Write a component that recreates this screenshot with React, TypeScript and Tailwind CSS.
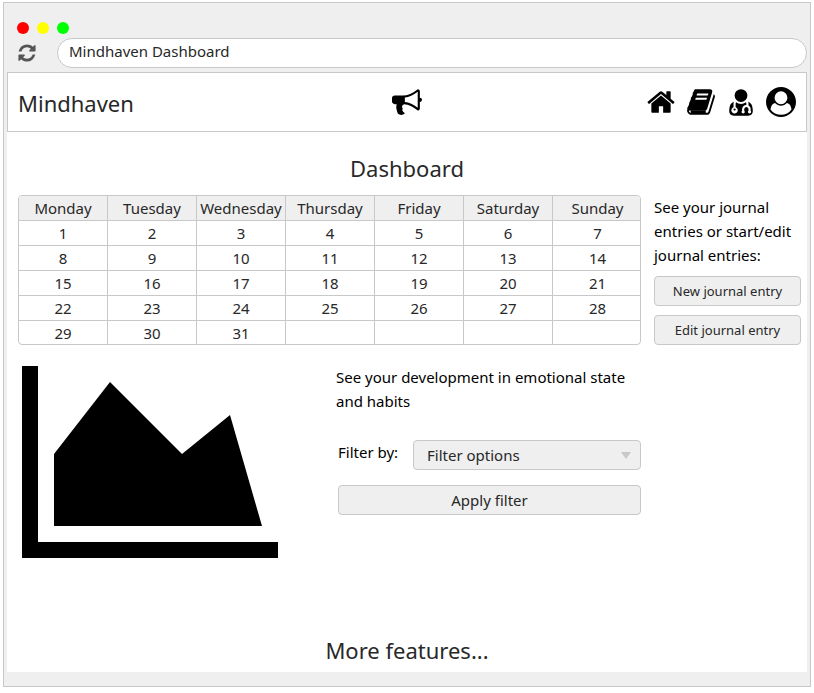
import { useState } from "react";
import type { ReactNode } from "react";

const DAYS = ["Monday", "Tuesday", "Wednesday", "Thursday", "Friday", "Saturday", "Sunday"];

const WEEKS = [0, 1, 2, 3, 4].map((week) =>
  DAYS.map((_, day) => week * 7 + day + 1).map((date) => (date <= 31 ? date : null)),
);

const ICONS = {
  refresh:
    "M1639 1056q0 5-1 7-64 268-268 434.5t-478 166.5q-146 0-282.5-55t-243.5-157l-129 129q-19 19-45 19t-45-19-19-45v-448q0-26 19-45t45-19h448q26 0 45 19t19 45-19 45l-137 137q71 66 161 102t187 36q134 0 250-65t186-179q11-17 53-117 8-23 30-23h192q13 0 22.5 9.5t9.5 22.5zm25-800v448q0 26-19 45t-45 19h-448q-26 0-45-19t-19-45 19-45l138-138q-148-137-349-137-134 0-250 65t-186 179q-11 17-53 117-8 23-30 23h-199q-13 0-22.5-9.5t-9.5-22.5v-7q65-268 270-434.5t480-166.5q146 0 284 55.5t245 156.5l130-129q19-19 45-19t45 19 19 45z",
  bullhorn:
    "M1664 640q53 0 90.5 37.5t37.5 90.5-37.5 90.5-90.5 37.5v384q0 52-38 90t-90 38q-417-347-812-380-58 19-91 66t-31 100.5 40 92.5q-20 33-23 65.5t6 58 33.5 55 48 50 61.5 50.5q-29 58-111.5 83t-168.5 11.5-132-55.5q-7-23-29.5-87.5t-32-94.5-23-89-15-101 3.5-98.5 22-110.5h-122q-66 0-113-47t-47-113v-192q0-66 47-113t113-47h480q435 0 896-384 52 0 90 38t38 90v384zm-128 604v-954q-394 302-768 343v270q377 42 768 341z",
  home: "M1472 992v480q0 26-19 45t-45 19h-384v-384h-256v384h-384q-26 0-45-19t-19-45v-480q0-1 .5-3t.5-3l575-474 575 474q1 2 1 6zm223-69l-62 74q-8 9-21 11h-3q-13 0-21-7l-692-577-692 577q-12 8-24 7-13-2-21-11l-62-74q-8-10-7-23.5t11-21.5l719-599q32-26 76-26t76 26l244 204v-195q0-14 9-23t23-9h192q14 0 23 9t9 23v408l219 182q10 8 11 21.5t-7 23.5z",
  book: "M1703 478q40 57 18 129l-275 906q-19 64-76.5 107.5t-122.5 43.5h-923q-77 0-148.5-53.5t-99.5-131.5q-24-67-2-127 0-4 3-27t4-37q1-8-3-21.5t-3-19.5q2-11 8-21t16.5-23.5 16.5-23.5q23-38 45-91.5t30-91.5q3-10 .5-30t-.5-28q3-11 17-28t17-23q21-36 42-92t25-90q1-9-2.5-32t.5-28q4-13 22-30.5t22-22.5q19-26 42.5-84.5t27.5-96.5q1-8-3-25.5t-2-26.5q2-8 9-18t18-23 17-21q8-12 16.5-30.5t15-35 16-36 19.5-32 26.5-23.5 36-11.5 47.5 5.5l-1 3q38-9 51-9h761q74 0 114 56t18 130l-274 906q-36 119-71.5 153.5t-128.5 34.5h-869q-27 0-38 15-11 16-1 43 24 70 144 70h923q29 0 56-15.5t35-41.5l300-987q7-22 5-57 38 15 59 43zm-1064 2q-4 13 2 22.5t20 9.5h608q13 0 25.5-9.5t16.5-22.5l21-64q4-13-2-22.5t-20-9.5h-608q-13 0-25.5 9.5t-16.5 22.5zm-83 256q-4 13 2 22.5t20 9.5h608q13 0 25.5-9.5t16.5-22.5l21-64q4-13-2-22.5t-20-9.5h-608q-13 0-25.5 9.5t-16.5 22.5z",
  doctor:
    "M576 1344q0 26-19 45t-45 19-45-19-19-45 19-45 45-19 45 19 19 45zm1024 109q0 121-73 190t-194 69h-874q-121 0-194-69t-73-190q0-68 5.5-131t24-138 47.5-132.5 81-103 120-60.5q-22 52-22 120v203q-58 20-93 70t-35 111q0 80 56 136t136 56 136-56 56-136q0-61-35.5-111t-92.5-70v-203q0-62 25-93 132 104 295 104t295-104q25 31 25 93v64q-106 0-181 75t-75 181v89q-32 29-32 71 0 40 28 68t68 28 68-28 28-68q0-42-32-71v-89q0-52 38-90t90-38 90 38 38 90v89q-32 29-32 71 0 40 28 68t68 28 68-28 28-68q0-42-32-71v-89q0-68-34.5-127.5t-93.5-93.5q0-10 .5-42.5t0-48-2.5-41.5-7-47-13-40q68 15 120 60.5t81 103 47.5 132.5 24 138 5.5 131zm-320-941q0 159-112.5 271.5t-271.5 112.5-271.5-112.5-112.5-271.5 112.5-271.5 271.5-112.5 271.5 112.5 112.5 271.5z",
  account:
    "M1523 1339q-22-155-87.5-257.5t-184.5-118.5q-67 74-159.5 115.5t-195.5 41.5-195.5-41.5-159.5-115.5q-119 16-184.5 118.5t-87.5 257.5q106 150 271 237.5t356 87.5 356-87.5 271-237.5zm-243-699q0-159-112.5-271.5t-271.5-112.5-271.5 112.5-112.5 271.5 112.5 271.5 271.5 112.5 271.5-112.5 112.5-271.5zm512 256q0 182-71 347.5t-190.5 286-285.5 191.5-349 71-349-71-285.5-191.5-190.5-286-71-347.5 71-348 191-286 286-191 348-71 348 71 286 191 191 286 71 348z",
};

function Icon({
  name,
  className,
  children,
}: {
  name: keyof typeof ICONS;
  className: string;
  children?: ReactNode;
}) {
  return (
    <svg viewBox="0 0 1792 1792" fill="currentColor" aria-hidden="true" className={className}>
      <path d={ICONS[name]} />
      {children}
    </svg>
  );
}

function NavButton({ label, children }: { label: string; children: ReactNode }) {
  return (
    <button type="button" aria-label={label} className="flex size-[30px] items-center justify-center text-black">
      {children}
    </button>
  );
}

function Button({ size, children }: { size: string; children: ReactNode }) {
  return (
    <button
      type="button"
      className={`flex h-[30px] w-full items-center justify-center rounded border border-[#c8c8c8] bg-[#efefef] ${size}`}
    >
      {children}
    </button>
  );
}

function BrowserBar() {
  const [address, setAddress] = useState("Mindhaven Dashboard");
  return (
    <div className="pt-[19px] pb-1">
      <div className="flex gap-2 pl-[10px]">
        <span className="size-3 rounded-full bg-[#ff0000]" />
        <span className="size-3 rounded-full bg-[#ffff00]" />
        <span className="size-3 rounded-full bg-[#00ff00]" />
      </div>
      <div className="mt-1 flex items-center gap-5 pl-[10px]">
        <button type="button" aria-label="Reload" className="text-[#555]">
          <Icon name="refresh" className="size-5" />
        </button>
        <input
          type="text"
          aria-label="Address"
          value={address}
          onChange={(event) => setAddress(event.target.value)}
          className="h-[30px] min-w-0 flex-1 rounded-full border border-[#c8c8c8] bg-white px-[11px] pb-1 text-[15px] outline-none"
        />
      </div>
    </div>
  );
}

function Header() {
  return (
    <header className="grid h-[60px] grid-cols-[1fr_auto_1fr] items-center border border-[#c8c8c8] px-[10px]">
      <span className="pt-0.5 text-[22px] leading-8">Mindhaven</span>
      <button type="button" aria-label="Announcements" className="text-black">
        <Icon name="bullhorn" className="size-[30px]" />
      </button>
      <nav className="flex justify-end gap-[10px]">
        <NavButton label="Home">
          <Icon name="home" className="size-[30px]" />
        </NavButton>
        <NavButton label="Journal">
          <Icon name="book" className="size-[30px]">
            <path d="M270 1390h910v160H300z" />
          </Icon>
        </NavButton>
        <NavButton label="Doctor">
          <Icon name="doctor" className="size-[30px]" />
        </NavButton>
        <NavButton label="Account">
          <Icon name="account" className="size-[30px]" />
        </NavButton>
      </nav>
    </header>
  );
}

function Calendar() {
  return (
    <div className="min-w-0 flex-1 overflow-hidden rounded border border-[#c8c8c8]">
      <table className="w-[calc(100%+2px)] table-fixed border-separate border-spacing-0 text-center text-[15px] leading-[22px]">
        <thead>
          <tr className="h-[25px] bg-[#efefef]">
            {DAYS.map((day) => (
              <th
                key={day}
                scope="col"
                className="border-r border-b border-[#c8c8c8] p-0 font-normal last:border-r-0"
              >
                {day}
              </th>
            ))}
          </tr>
        </thead>
        <tbody>
          {WEEKS.map((week, index) => (
            <tr key={index} className="h-[25px] last:h-[23px] [&:last-child>td]:border-b-0">
              {week.map((date, day) => (
                <td key={day} className="border-r border-b border-[#c8c8c8] p-0 last:border-r-0">
                  {date}
                </td>
              ))}
            </tr>
          ))}
        </tbody>
      </table>
    </div>
  );
}

function AreaChart() {
  return (
    <svg viewBox="0 0 256 192" role="img" aria-label="Emotional state over time" className="w-64 shrink-0 text-black">
      <path fill="currentColor" d="M0 0h16v176h240v16H0z" />
      <path fill="currentColor" d="M32 88l56-72 72 72 48-39 32 111H32z" />
    </svg>
  );
}

export default function App() {
  return (
    <div className="bg-white px-[3px] pt-0.5 pb-1.5 font-['Segoe_UI','Noto_Sans',sans-serif] text-[#282828]">
      <div className="border border-[#c8c8c8] bg-[#efefef] px-[3px] pb-3.5">
        <BrowserBar />
        <div className="bg-white">
          <Header />
          <main>
            <h1 className="mt-5 text-center text-[22px] leading-8">Dashboard</h1>
            <section className="mt-[11px] flex gap-[13px] pr-1.5 pl-[11px]">
              <Calendar />
              <div className="flex w-[147px] flex-col">
                <p className="text-[15px] leading-6 text-black">
                  See your journal entries or start/edit journal entries:
                </p>
                <div className="mt-[9px] flex flex-col gap-[9px]">
                  <Button size="pt-0.5 text-[13px]">New journal entry</Button>
                  <Button size="pt-0.5 text-[13px]">Edit journal entry</Button>
                </div>
              </div>
            </section>
            <section className="mt-5 flex justify-between pr-[166px] pl-[15px]">
              <div className="pt-px">
                <AreaChart />
              </div>
              <div className="w-[305px] text-[15px]">
                <p className="leading-6 text-black">See your development in emotional state and habits</p>
                <div className="mt-[27px] flex pl-0.5">
                  <label htmlFor="filter" className="w-[75px] leading-6 text-black">
                    Filter by:
                  </label>
                  <div className="grid flex-1 items-center">
                    <select
                      id="filter"
                      className="col-start-1 row-start-1 h-[30px] appearance-none rounded border border-[#c8c8c8] bg-[#efefef] px-[13px]"
                    >
                      <option>Filter options</option>
                    </select>
                    <svg
                      viewBox="0 0 10 7"
                      aria-hidden="true"
                      className="pointer-events-none col-start-1 row-start-1 mr-[10px] w-[10px] justify-self-end text-[#c8c8c8]"
                    >
                      <path fill="currentColor" d="M0 0h10L5 7z" />
                    </svg>
                  </div>
                </div>
                <div className="mt-[15px] pl-0.5">
                  <Button size="text-[15px]">Apply filter</Button>
                </div>
              </div>
            </section>
            <h2 className="mt-[76px] pb-1.5 text-center text-[22px] leading-8">More features...</h2>
          </main>
        </div>
      </div>
    </div>
  );
}
